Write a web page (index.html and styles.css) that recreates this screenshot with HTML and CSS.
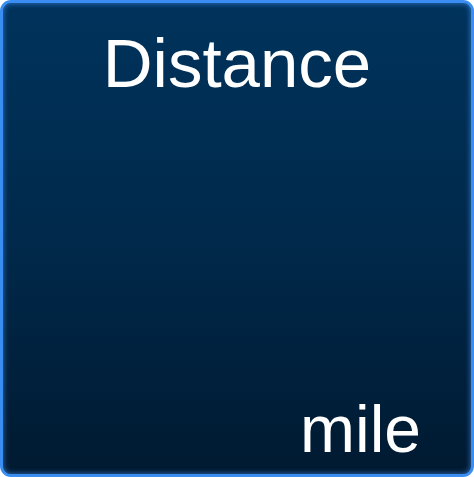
FILE: index.html
```html
<!DOCTYPE html>
<html>
<head>
<meta charset="utf-8">
<link rel="stylesheet" href="styles.css">
</head>
<body>
<div class="tile">
  <div class="title">Distance</div>
  <div class="unit">mile</div>
</div>
</body>
</html>
```
FILE: styles.css
```css
html, body {
  margin: 0;
  padding: 0;
  background: #ffffff;
}
.tile {
  box-sizing: border-box;
  width: 474px;
  height: 477px;
  border: 3px solid #3a8ef2;
  border-radius: 11px;
  background: linear-gradient(to bottom, #00335c 0%, #00294b 50%, #001a31 100%);
  box-shadow: inset 0 0 5px 1px rgba(70, 150, 255, 0.55);
  display: flex;
  flex-direction: column;
  justify-content: space-between;
  font-family: "Liberation Sans", Arial, sans-serif;
  color: #ffffff;
  padding: 21px 50px 7px 0;
}
.title {
  font-size: 69px;
  line-height: 80px;
  text-align: center;
  padding-left: 50px;
}
.unit {
  font-size: 66px;
  line-height: 76px;
  text-align: right;
}
```
